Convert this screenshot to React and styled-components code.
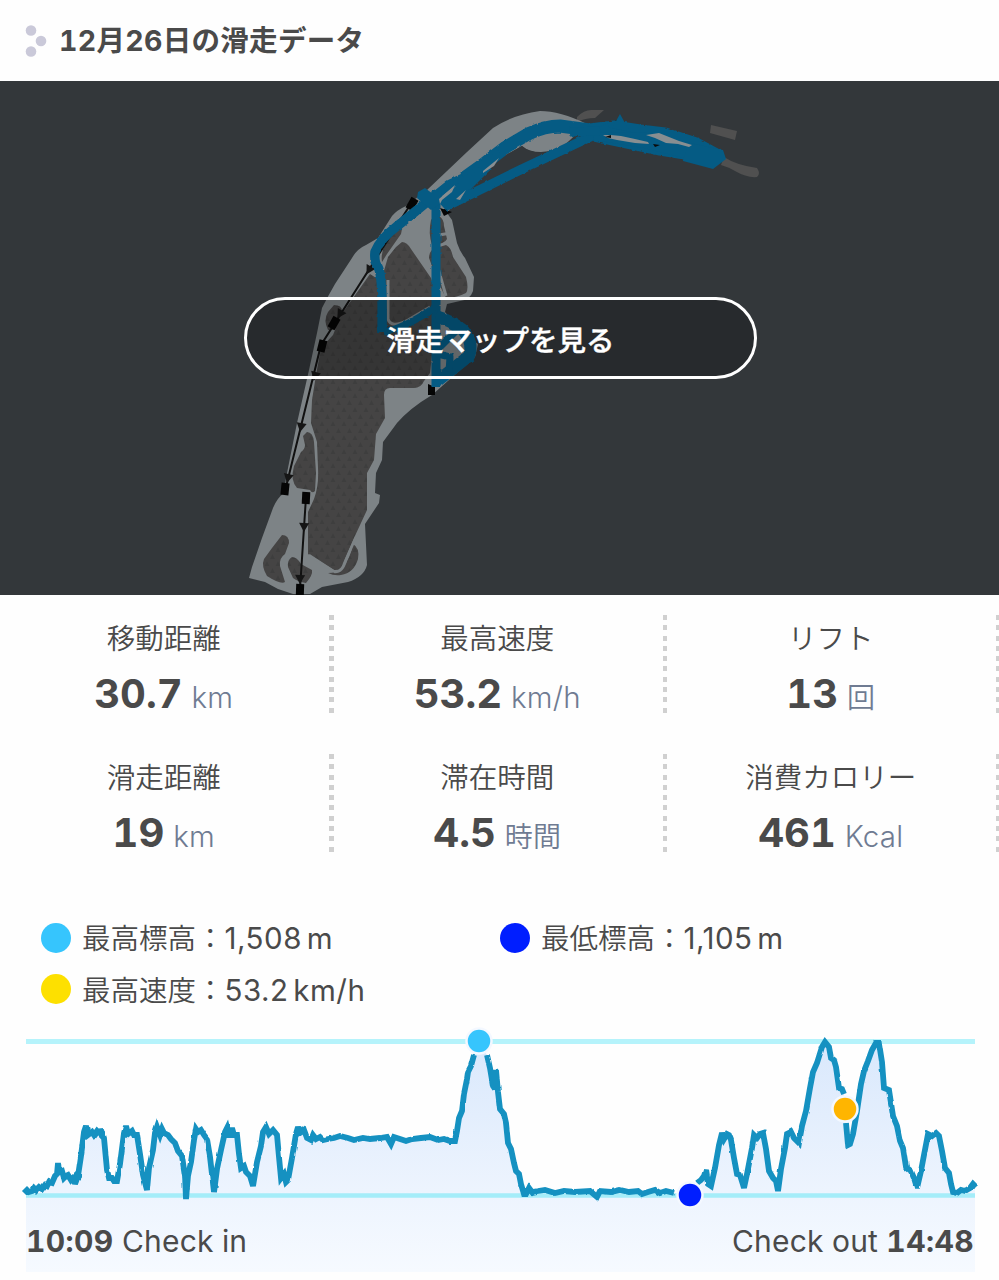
import React from 'react';
import styled, { createGlobalStyle } from 'styled-components';

const GlobalStyle = createGlobalStyle`
  * {
    box-sizing: border-box;
  }

  body {
    margin: 0;
    background: #fefefe;
    color: #4a4a4a;
    font-family: Inter, 'Noto Sans CJK JP', sans-serif;
    font-variant-numeric: tabular-nums;
  }
`;

const Page = styled.main`
  width: 999px;
  height: 1280px;
  overflow: hidden;
`;

const Header = styled.header`
  display: flex;
  align-items: center;
  height: 81px;
  padding-left: 25px;
`;

const HeaderDots = styled.svg`
  width: 22px;
  height: 32px;
  margin-right: 12px;
`;

const Title = styled.h1`
  margin: 0;
  font-size: 28.5px;
  font-weight: 700;
  line-height: 40px;
  letter-spacing: 0.3px;
  white-space: nowrap;
`;

const MapPanel = styled.section`
  display: grid;
  place-items: center;
  height: 514px;
  background: #33373a;

  > * {
    grid-area: 1 / 1;
  }
`;

const MapDrawing = styled.svg`
  display: block;
  width: 999px;
  height: 514px;
`;

const MapButton = styled.button`
  z-index: 1;
  width: 513px;
  height: 82px;
  margin-left: 2px;
  padding: 5px 0 0;
  border: 3px solid #fff;
  border-radius: 41px;
  background: rgba(0, 0, 0, 0.22);
  color: #fff;
  font-family: inherit;
  font-size: 28.5px;
  font-weight: 500;
  line-height: 40px;
  -webkit-text-stroke: 0.4px #fff;
`;

const Stats = styled.section`
  display: grid;
  grid-template-columns: repeat(3, 333.5px);
  row-gap: 41px;
  padding-top: 20px;
`;

const Stat = styled.div`
  display: flex;
  flex-direction: column;
  align-items: center;
  height: 98px;
  padding-right: 6px;
  background: repeating-linear-gradient(#d0d0d0 0 5px, transparent 5px 10.28px) 329px 0 / 5px 98px no-repeat;
`;

const StatLabel = styled.div`
  margin-top: 3px;
  font-size: 28.5px;
  font-weight: 350;
  line-height: 42px;
`;

const StatValue = styled.div`
  display: flex;
  align-items: baseline;
  gap: 9px;
  margin-top: 10px;
  font-size: 40px;
  font-weight: 700;
  line-height: 48px;
`;

const Unit = styled.span`
  color: #6f7b92;
  font-size: ${(props) => (props.$kanji ? '28px' : '29.5px')};
  font-weight: 350;
  letter-spacing: 0.2px;
`;

const Legend = styled.ul`
  display: grid;
  grid-template-columns: 459px 1fr;
  grid-auto-rows: 51.5px;
  align-items: center;
  margin: 60px 0 0;
  padding: 0 0 0 41px;
  list-style: none;
`;

const LegendItem = styled.li`
  display: flex;
  align-items: center;
  font-size: 28.5px;
  font-weight: 350;
  line-height: 40px;
  white-space: nowrap;

  &::before {
    content: '';
    width: 30px;
    height: 30px;
    margin-right: 11px;
    border-radius: 50%;
    background: ${(props) => props.$color};
  }
`;

const LegendText = styled.span`
  padding-top: 2px;
`;

const LegendValue = styled.span`
  font-size: 29.5px;
  font-weight: 400;
  font-variant-numeric: normal;
  letter-spacing: 0.5px;
  word-spacing: -4px;
`;

const Chart = styled.section`
  display: grid;
  margin-top: 7px;

  > * {
    grid-area: 1 / 1;
  }
`;

const ChartDrawing = styled.svg`
  display: block;
  width: 999px;
  height: 250px;
`;

const ChartTimes = styled.div`
  display: flex;
  justify-content: space-between;
  align-self: end;
  z-index: 1;
  padding: 0 25px 13px 26px;
  font-size: 30px;
  font-weight: 400;
  line-height: 36px;
  letter-spacing: 0.2px;
`;

const Time = styled.b`
  font-weight: 700;
  letter-spacing: 0.4px;
`;

const stats = [
  { label: '移動距離', value: '30.7', unit: 'km' },
  { label: '最高速度', value: '53.2', unit: 'km/h' },
  { label: 'リフト', value: '13', unit: '回', kanji: true },
  { label: '滑走距離', value: '19', unit: 'km' },
  { label: '滞在時間', value: '4.5', unit: '時間', kanji: true },
  { label: '消費カロリー', value: '461', unit: 'Kcal' },
];

const legend = [
  { label: '最高標高：', value: '1,508 m', color: '#36c5fd' },
  { label: '最低標高：', value: '1,105 m', color: '#001eff' },
  { label: '最高速度：', value: '53.2 km/h', color: '#fde000' },
];

const BLUE = '#055b84';
const PISTE = '#7d8386';

// lift stations: x, y, rotation
const stations = [
  [412, 204, 30], [334, 323, 30], [322, 346, 14], [285, 489, 6], [306, 498, 3], [300, 590, 2],
];

// direction marks along the lifts
const arrows = [
  [369, 270, 30], [340, 314, 32], [315, 376, 15], [301, 427, 10], [288, 478, 12], [304, 527, 2], [300, 579, 2],
];

const SkiMap = () => (
  <MapDrawing viewBox="0 81 999 514">
    <defs>
      <pattern id="trees" width="11" height="14" patternUnits="userSpaceOnUse">
        <rect width="11" height="14" fill="#454444" />
        <path d="M3 1l2.500 5h-5zM8.500 8l2.500 5H6z" fill="#3e3e3e" />
      </pattern>
      <filter id="rough" x="-5%" y="-5%" width="110%" height="110%" colorInterpolationFilters="sRGB">
        <feTurbulence type="fractalNoise" baseFrequency="0.25" numOctaves="1" seed="4" />
        <feDisplacementMap in="SourceGraphic" scale="3" xChannelSelector="R" yChannelSelector="G" />
      </filter>
    </defs>

    {/* side runs */}
    <g fill="#505050">
      <path d="M577 117q7-7 14-7h13l-9 8q-10 0-18 4zM711 125l26 6-2 9-25-7zM724 157q12 8 33 11 4 6 0 9-10 1-22-6-7-4-14-6z" />
    </g>

    {/* pistes */}
    <path
      fill={PISTE}
      d="M427 190L467 152 493 128Q512 115 540 111 560 111 587 124L570 140Q559 152 541 152 529 152 522 146L480 170 447 213 452 220 457 243Q460 252 465 258L474 277 473 291Q470 300 460 301L447 304 445 312 463 333 478 344 475 357 432 395Q410 408 397 423L383 442 382 460 376 473 375 493L380 495 379 503 365 524 367 565Q364 577 348 582L322 587 310 594H293L278 589 265 582 249 578 252 567 262 538 273 508Q277 498 284 493L286 478 297 423 309 370 317 333 322 308Q328 296 335 284L352 258Q357 249 366 245L378 238 392 216Q397 210 406 206Z"
    />
    <path fill="#33373a" d="M447 209L480 184 500 158 522 146Q530 154 547 152L567 145 575 143Z" />
    <path fill="#33373a" d="M462 181l37-30 18-9-15 15-33 30-14 13z" />

    {/* forests */}
    <g fill="url(#trees)">
      <path d="M402 242Q407 242 411 249L431 278 438 300 430 373 424 381Q421 388 414 388H390Q384 388 384 395L385 418 376 434 374 460 367 473 367 510 354 538 343 563Q341 571 334 570L308 554 308 512 314 499Q319 486 318 468L317 442 311 423 312 400 316 375 321 348 333 335 341 315 370 274 381 281 388 257 396 247Z" />
      <path d="M429 258Q429 250 436 248L446 245Q451 247 453 257L466 277Q469 289 466 293 456 298 446 298L438 282Z" />
      <path d="M434 216h5q5 3 5 10l3 13q-2 5-15 6-4-12-1-25z" />
      <path d="M307 432q6 0 7 10l2 31-1 18q-3 3-5-1l-13-2q-7-8-3-22l7-14q4-3 4-7l-2-9z" />
      <path d="M282 535q7 0 7 8l-4 11q-6 4-5 12l5 16q-4 3-18-6-6-10-3-17l8-11z" />
      <path d="M292 557q5 0 9 7l11 6q1 5-6 13-8-1-13-5l-5-11q-1-7 4-10z" />
      <path d="M353 544q7 4 5 15-4 14-17 16-7 1-13-2 9 0 15-6 7-8 10-23z" />
      <path d="M334 305q8 0 8 6l-2 15q-7 5-12 4-5-10 0-18z" />
      <path d="M390 236l9-13 4 1-2 10-14 20-5 8q-2-12 8-26z" />
    </g>
    <path d="M388 280v39q3 10 20 1l22-13M438 268l8 28M439 235l12-2M431 377l-7 12" fill="none" stroke={PISTE} strokeWidth="3" />
    <path d="M309 555L335 572Q343 572 346 560L356 537" fill="none" stroke={PISTE} strokeWidth="2.500" />
    <path d="M435 316Q452 324 457 341L455 355 433 371Z" fill={PISTE} />

    {/* lifts */}
    <path d="M412 202L321 345 286 487M306 497L300 589M443 211L621 119M600 136L716 162" fill="none" stroke="#111" strokeWidth="2" />
    {stations.map(([x, y, angle]) => (
      <rect key={`${x}-${y}`} x={x - 4} y={y - 6} width="8" height="12" fill="#050505" transform={`rotate(${angle} ${x} ${y})`} />
    ))}
    {arrows.map(([x, y, angle]) => (
      <path key={`${x}-${y}`} d="M-5-4H5L0 5z" fill="#151515" transform={`translate(${x} ${y}) rotate(${angle})`} />
    ))}
    <path d="M428 384l7 3v8h-7zM440 208l12 4-8 4zM590 137l8 4h-7z" fill="#050505" />

    {/* recorded track */}
    <g fill="none" stroke={BLUE} strokeLinejoin="round" filter="url(#rough)">
      <path strokeWidth="9.500" d="M433 197Q410 216 396 227 380 239 375 252 374 263 378 267 383 275 382 332" />
      <path strokeWidth="9" d="M424 200L435 196 450 184 467 176" />
      <path strokeWidth="13" d="M464 178L485 163 506 147 528 134Q545 126 560 126L590 130 614 127 640 131 665 134 696 144 720 157" />
      <path strokeWidth="9.500" d="M447 206L520 170 590 137 610 127" />
      <path strokeWidth="13" d="M443 207L459 192 472 179 486 165" />
      <path strokeWidth="8" d="M462 192L482 170 500 153" />
      <path strokeWidth="11" d="M594 136L660 150 709 158M690 152L716 158" />
      <path strokeWidth="9" d="M436 191V387M570 132L600 131" />
      <path strokeWidth="7" d="M384 332Q403 329 434 308" />
      <path strokeWidth="12" d="M436 316Q452 321 463 330 474 343 469 356L436 382" />
      <path strokeWidth="7" d="M457 330L440 347 438 354 450 357 449 372" />
    </g>
    <path fill={BLUE} d="M612 128l8-14 5 9 6 9zM685 142l38 8 3 9-13 10-30-8z" />
    <path fill={BLUE} d="M418 192l7-4 8 6 8-4 2 12-12 8-14-12z" />
    <path fill={BLUE} d="M600 132l48 1 40 11-4 14-40-10-44-7z" />
    <g fill="#888e91">
      <path d="M603 135l8 0 10 1 14 3 13 3 1 2-14-1-18-3-9-2zM646 135l13-2 20 8 13 4-3 2-11-3-12-1-11-5z" />
      <path d="M439 199l16-14-3 7-10 8-2 4zM483 171l16-13-5 8-11 7zM456 199l10-9-6 10z" />
    </g>
    <path d="M605 137l6-2v3zM653 144l7 1-5 2z" fill="#0b0b0b" />
  </MapDrawing>
);

// elevation samples, split where a marker interrupts the line
const elevation = [
  '24,1193 27,1190 29,1192 32,1191 34,1188 36,1190 39,1187 42,1189 45,1185 47,1186 49,1182 52,1183 55,1176 57,1174 58,1163 59,1172 62,1171 64,1178 66,1176 68,1175 71,1180 74,1177 75,1184 78,1176 81,1156 84,1132 86,1126 88,1135 92,1132 94,1135 97,1131 100,1134 101,1129 104,1138 107,1170 109,1178 112,1178 114,1181 117,1181 120,1164 124,1133 126,1126 128,1134 132,1131 134,1135 137,1135 140,1154 143,1175 147,1190 149,1168 153,1150 155,1133 157,1127 160,1135 162,1129 164,1133 168,1135 171,1139 175,1143 178,1151 182,1156 185,1176 186,1199 188,1176 191,1162 194,1140 196,1129 198,1132 201,1130 204,1135 207,1139 210,1157 214,1192 217,1169 221,1150 225,1132 227,1128 229,1137 232,1128 234,1135 237,1135 239,1154 241,1168 244,1166 246,1172 250,1176 253,1186 257,1162 261,1146 263,1132 266,1127 269,1134 273,1130 277,1135 279,1157 281,1178 284,1174 286,1182 288,1180 292,1158 296,1134 298,1127 300,1133 304,1130 307,1138 311,1140 313,1135 316,1139 320,1137 323,1140 328,1139 334,1138 340,1136 348,1138 354,1140 363,1138 370,1139 380,1138 387,1137 391,1144 394,1137 400,1139 406,1141 412,1139 421,1138 430,1137 438,1140 444,1139 450,1141 455,1141 457,1131 459,1118 462,1111 464,1094 467,1079 468,1072 471,1066 474,1055',
  '487,1055 490,1068 493,1086 495,1089 496,1070 498,1092 500,1109 504,1114 506,1123 508,1143 511,1149 514,1163 516,1171 519,1174 521,1184 524,1194 526,1194 529,1188 532,1192 538,1191 545,1190 555,1193 564,1191 575,1192 590,1191 597,1197 600,1191 611,1192 620,1190 629,1192 638,1191 642,1194 648,1192 655,1190 660,1193 666,1191 674,1193',
  '697,1183 701,1180 704,1176 706,1170 708,1184 711,1186 715,1168 719,1145 722,1133 724,1139 727,1134 729,1135 731,1140 734,1158 737,1174 740,1175 744,1188 747,1174 752,1148 754,1135 757,1138 760,1134 763,1133 766,1149 769,1171 773,1178 776,1181 778,1191 781,1169 785,1148 787,1134 791,1132 794,1138 799,1143 802,1126 806,1111 810,1088 813,1072 817,1063 822,1047 825,1042 829,1047 831,1058 834,1060 836,1067 839,1088 842,1089 844,1094',
  '846,1123 848,1145 850,1144 853,1134 857,1111 861,1084 864,1071 868,1061 872,1050 876,1043 879,1043 882,1062 884,1088 889,1090 893,1116 897,1126 900,1141 903,1148 906,1167 911,1171 914,1178 917,1188 921,1171 924,1155 928,1134 932,1136 936,1133 939,1136 942,1151 945,1168 949,1173 951,1184 953,1192 957,1193 961,1190 965,1191 970,1188 973,1184 976,1187',
];

// the shaded area follows the same samples, bridged over the markers
const area = `M26 1272 L26 1193 L${elevation[0]} 479,1043 ${elevation[1]} 690,1194 ${elevation[2]} ${elevation[3]} L975 1187 L975 1272Z`;

const markers = [
  { x: 479, y: 1041, color: '#36c5fd' },
  { x: 690, y: 1195, color: '#001eff' },
  { x: 845, y: 1109, color: '#ffb500' },
];

const ElevationChart = () => (
  <ChartDrawing viewBox="0 1022 999 250">
    <defs>
      <linearGradient id="shade" gradientUnits="userSpaceOnUse" x1="0" y1="1040" x2="0" y2="1272">
        <stop offset="0" stopColor="#d9e8fc" />
        <stop offset="0.65" stopColor="#edf4fe" />
        <stop offset="1" stopColor="#f6faff" />
      </linearGradient>
      <filter id="jitter" filterUnits="userSpaceOnUse" x="0" y="1022" width="999" height="250" colorInterpolationFilters="sRGB">
        <feTurbulence type="fractalNoise" baseFrequency="0.25 0.12" numOctaves="1" seed="9" />
        <feDisplacementMap in="SourceGraphic" scale="2.500" xChannelSelector="R" yChannelSelector="G" />
      </filter>
    </defs>
    <path d={area} fill="url(#shade)" />
    <path d="M26 1041.500H975" stroke="#b5f3fb" strokeWidth="5" />
    <path d="M26 1195.500H975" stroke="#a5edf9" strokeWidth="4.500" />
    <g fill="none" stroke="#1591c1" strokeWidth="5.800" strokeMiterlimit="3" filter="url(#jitter)">
      {elevation.map((points) => (
        <polyline key={points.slice(0, 8)} points={points} />
      ))}
    </g>
    {markers.map((m) => (
      <circle key={m.x} cx={m.x} cy={m.y} r="12.500" fill={m.color} stroke="#f4f8ff" strokeWidth="2.500" />
    ))}
  </ChartDrawing>
);

const App = () => (
  <Page lang="ja">
    <GlobalStyle />
    <Header>
      <HeaderDots viewBox="0 0 22 32" fill="#cac9d9">
        <circle cx="6" cy="5.500" r="5.300" />
        <circle cx="16" cy="16" r="5.300" />
        <circle cx="6" cy="26.500" r="5.300" />
      </HeaderDots>
      <Title>12月26日の滑走データ</Title>
    </Header>
    <MapPanel>
      <SkiMap />
      <MapButton type="button">滑走マップを見る</MapButton>
    </MapPanel>
    <Stats>
      {stats.map((s) => (
        <Stat key={s.label}>
          <StatLabel>{s.label}</StatLabel>
          <StatValue>
            {s.value}
            <Unit $kanji={s.kanji}>{s.unit}</Unit>
          </StatValue>
        </Stat>
      ))}
    </Stats>
    <Legend>
      {legend.map((item) => (
        <LegendItem key={item.label} $color={item.color}>
          <LegendText>
            {item.label}
            <LegendValue>{item.value}</LegendValue>
          </LegendText>
        </LegendItem>
      ))}
    </Legend>
    <Chart>
      <ElevationChart />
      <ChartTimes>
        <span><Time>10:09</Time> Check in</span>
        <span>Check out <Time>14:48</Time></span>
      </ChartTimes>
    </Chart>
  </Page>
);

export default App;
